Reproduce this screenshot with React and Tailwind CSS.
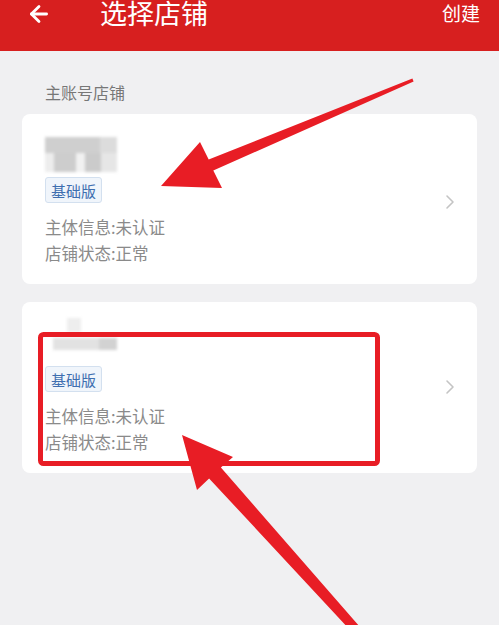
import { ArrowLeft } from "lucide-react";

const font = "font-['Noto_Sans_CJK_SC','Noto_Sans',sans-serif]";

const Chevron = () => (
  <svg width="10" height="16" viewBox="0 0 10 16" className="shrink-0">
    <path d="M2 2l6 6-6 6" fill="none" stroke="#c4c4c4" strokeWidth="1.6" strokeLinecap="round" strokeLinejoin="round" />
  </svg>
);

const Badge = () => (
  <div className="inline-flex h-[26px] px-[5px] items-center rounded-[3px] border border-[#d3e0ef] bg-[#f0f5fb] text-[15px] leading-none text-[#3f6fb0]">
    基础版
  </div>
);

const InfoLines = () => (
  <div className="text-[16.5px] leading-[26px] text-[#8a8a8a]">
    <p>主体信息:未认证</p>
    <p>店铺状态:正常</p>
  </div>
);

const StoreCard = ({ pad, gap, children }) => (
  <div className={`bg-white rounded-[8px] flex items-center justify-between pl-[23px] pr-[22px] ${pad}`}>
    <div className="flex flex-col">
      {children}
      <div className={`flex ${gap}`}>
        <Badge />
      </div>
      <div className="mt-[11px]">
        <InfoLines />
      </div>
    </div>
    <Chevron />
  </div>
);

export default function App() {
  return (
    <div className={`relative w-[499px] h-[625px] overflow-hidden bg-[#f0f0f2] ${font}`}>
      {/* header */}
      <div className="h-[51px] bg-[#d71f1f] flex items-start text-white">
        <div className="w-[100px] pl-[26px] pt-[1px]">
          <ArrowLeft size={26} strokeWidth={2.6} />
        </div>
        <h1 className="text-[27px] leading-[27px] -mt-[1px] flex-1">选择店铺</h1>
        <span className="text-[19px] leading-[26px] pr-[19px]">创建</span>
      </div>

      <div className="px-[22px]">
        <p className="mt-[31px] pl-[23px] text-[16px] leading-[20px] text-[#777]">主账号店铺</p>

        <div className="mt-[12px]">
          <StoreCard pad="pt-[23px] pb-[18px]" gap="mt-[5px]">
            <div className="w-[72px] h-[35px] flex flex-col blur-[1.5px]">
              <div className="h-[16px] flex">
                <div className="w-[55px] bg-[#cfcfcf]" />
                <div className="flex-1 bg-[#dcdcdc]" />
              </div>
              <div className="flex-1 flex">
                <div className="w-[9px] bg-[#ededed]" />
                <div className="w-[22px] bg-[#cdcdcd]" />
                <div className="w-[9px] bg-[#f1f1f1]" />
                <div className="w-[16px] bg-[#cbcbcb]" />
                <div className="flex-1 bg-[#e6e6e6]" />
              </div>
            </div>
          </StoreCard>
        </div>

        <div className="mt-[18px]">
          <StoreCard pad="pt-[16px] pb-[18px]" gap="mt-[14px]">
            <div className="w-[72px] h-[34px] flex flex-col blur-[1.5px]">
              <div className="h-[14px] flex">
                <div className="ml-[22px] w-[14px] bg-[#eeeeee]" />
              </div>
              <div className="mt-[6px] h-[12px] flex">
                <div className="ml-[8px] w-[46px] bg-[#e2e2e2]" />
                <div className="w-[18px] bg-[#d2d2d2]" />
              </div>
            </div>
          </StoreCard>
        </div>
      </div>

      {/* annotations */}
      <svg className="absolute inset-0 pointer-events-none" width="499" height="625" viewBox="0 0 499 625">
        <rect x="40.5" y="334.5" width="337" height="129" rx="3" fill="none" stroke="#e81d25" strokeWidth="5" />
        <polygon
          points="161,186 200,142 208.7,159.5 412.4,78.6 413.6,81.4 213.3,170.5 222,188"
          fill="#e81d25"
        />
        <polygon
          points="182,435 233,457 220.9,467.6 368.7,637 362.1,643 209.1,478.4 197,490"
          fill="#e81d25"
        />
      </svg>
    </div>
  );
}
